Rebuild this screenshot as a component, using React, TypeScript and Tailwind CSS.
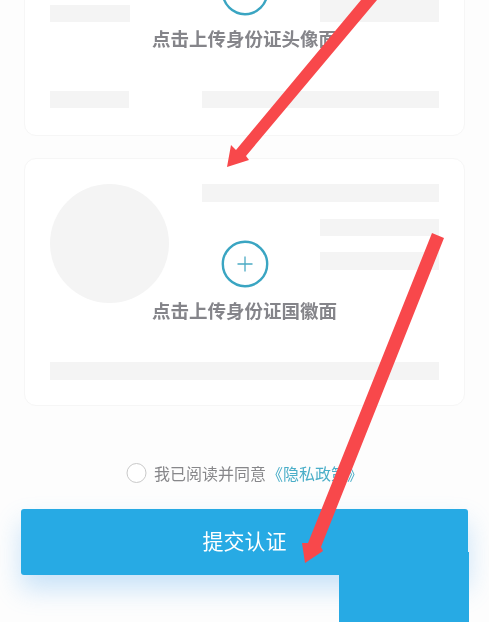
export default function App() {
  const font = { fontFamily: '"Noto Sans CJK SC", "Noto Sans", sans-serif' };
  const Plus = () => (
    <svg width="48" height="48" viewBox="0 0 48 48" fill="none">
      <circle cx="24" cy="24" r="22.2" stroke="#3aa5c2" strokeWidth="2.4" />
      <path d="M24 16.5V31.5M16.5 24H31.5" stroke="#4aaac4" strokeWidth="1.3" />
    </svg>
  );
  return (
    <div className="relative w-[489px] h-[622px] overflow-hidden bg-[#fdfdfd] blur-[0.4px]" style={font}>
      <div className="flex flex-col px-[21px] -mt-[114px]">
        {/* front card */}
        <div className="relative mx-[3px] h-[250px] rounded-[12px] border border-[#f6f6f6] bg-white flex flex-col justify-end px-[25px] pb-[27px]">
          <div className="flex justify-between items-end">
            <div className="w-[80px] h-[17px] bg-[#f4f4f4]" />
            <div className="w-[119px] h-[60px] bg-[#f4f4f4]" />
          </div>
          <div className="mt-[69px] flex justify-between">
            <div className="w-[79px] h-[17px] bg-[#f4f4f4]" />
            <div className="w-[237px] h-[17px] bg-[#f4f4f4]" />
          </div>
          <div className="absolute left-0 right-0 top-[81px] flex flex-col items-center gap-[9px]">
            <Plus />
            <span className="text-[18.5px] leading-[26px] font-bold text-[#85858a]">点击上传身份证头像面</span>
          </div>
        </div>

        {/* emblem card */}
        <div className="relative mx-[3px] mt-[22px] h-[248px] rounded-[12px] border border-[#f6f6f6] bg-white flex flex-col px-[25px] pt-[25px]">
          <div className="flex justify-between">
            <div className="w-[119px] h-[119px] rounded-full bg-[#f4f4f4]" />
            <div className="w-[237px] flex flex-col items-end gap-[17px]">
              <div className="w-full h-[18px] bg-[#f4f4f4]" />
              <div className="w-[119px] h-[17px] bg-[#f4f4f4]" />
              <div className="w-[119px] h-[18px] -mt-[1px] bg-[#f4f4f4]" />
            </div>
          </div>
          <div className="mt-[59px] h-[18px] bg-[#f4f4f4]" />
          <div className="absolute left-0 right-0 top-[81px] flex flex-col items-center gap-[9px]">
            <Plus />
            <span className="text-[18.5px] leading-[26px] font-bold text-[#85858a]">点击上传身份证国徽面</span>
          </div>
        </div>

        {/* agreement */}
        <div className="mt-[56px] flex items-center justify-center h-[22px] translate-x-[0.5px]">
          <span className="w-[20px] h-[20px] rounded-full border-[1.5px] border-[#c9c9c9] bg-white" />
          <span className="ml-[7px] text-[16px] leading-[22px] text-[#87878a]">我已阅读并同意</span>
          <span className="ml-[1px] text-[16px] leading-[22px] text-[#4aaec8]">《隐私政策》</span>
        </div>

        {/* submit */}
        <button className="mt-[25px] h-[66px] w-[447px] rounded-[3px] bg-[#27aae4] pb-[2px] text-white text-[21px] shadow-[0_14px_26px_rgba(90,170,240,0.32)]">
          提交认证
        </button>
      </div>

      {/* blue patch over the button corner */}
      <div className="absolute left-[339px] top-[552px] w-[130px] h-[70px] bg-[#27aae4]" />

      {/* red annotation arrows */}
      <svg className="absolute inset-0" width="489" height="622" viewBox="0 0 489 622">
        <path
          d="M361 0 L236 150 L231 145 L227 167 L249 160 L246 156 L377 0 Z"
          fill="#f8484b"
        />
        <path
          d="M432 233 L308 543 L302 543 L305 563 L323 551 L321 547 L444 238 Z"
          fill="#f8484b"
        />
      </svg>
    </div>
  );
}
